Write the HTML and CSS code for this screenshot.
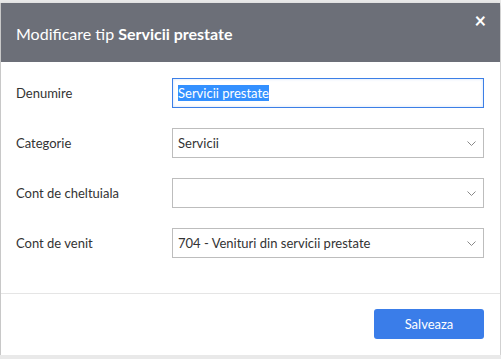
FILE: index.html
```html
<!DOCTYPE html>
<html>
<head>
    <title>Modificare tip</title>
    <meta name="viewport" content="width=device-width, initial-scale=1">
    <link rel="stylesheet" href="styles.css">
</head>
<body>
    <div class="modal">
        <div class="modal-header">
            <h3>Modificare tip <b>Servicii prestate</b></h3>
            <span class="close">&times;</span>
        </div>
        <div class="modal-body">
            <div class="row">
                <label>Denumire</label>
                <div class="field focused"><span class="selected">Servicii prestate</span></div>
            </div>
            <div class="row">
                <label>Categorie</label>
                <div class="field select">
                    <span>Servicii</span>
                    <svg class="chevron" width="9" height="5" viewBox="0 0 9 5"><path d="M0.5 0.5l4 4 4-4" fill="none" stroke="#888" stroke-width="1"/></svg>
                </div>
            </div>
            <div class="row">
                <label>Cont de cheltuiala</label>
                <div class="field select">
                    <span></span>
                    <svg class="chevron" width="9" height="5" viewBox="0 0 9 5"><path d="M0.5 0.5l4 4 4-4" fill="none" stroke="#888" stroke-width="1"/></svg>
                </div>
            </div>
            <div class="row">
                <label>Cont de venit</label>
                <div class="field select">
                    <span>704 - Venituri din servicii prestate</span>
                    <svg class="chevron" width="9" height="5" viewBox="0 0 9 5"><path d="M0.5 0.5l4 4 4-4" fill="none" stroke="#888" stroke-width="1"/></svg>
                </div>
            </div>
        </div>
        <div class="modal-footer">
            <button class="button">Salveaza</button>
        </div>
    </div>
</body>
</html>
```

FILE: styles.css
```css
body {
    font-family: Lato, 'Liberation Sans', sans-serif;
    margin: 0;
    background-color: #e9e9e9;
    color: #333;
}
.modal {
    width: 499px;
    margin-top: 3px;
    background-color: #fff;
    border-left: 1px solid #c8c8c8;
    box-shadow: 0 2px 4px rgba(0,0,0,0.25);
}
.modal-header {
    position: relative;
    height: 59px;
    background-color: #6c6f78;
    color: #fff;
    display: flex;
    align-items: center;
    padding-left: 15px;
}
.modal-header h3 {
    margin: 0 0 -2px 0;
    font-size: 16px;
    font-weight: normal;
}
.modal-header b {
    font-weight: bold;
}
.close {
    position: absolute;
    top: 7px;
    right: 14px;
    font-size: 20px;
    font-weight: bold;
    line-height: 20px;
}
.modal-body {
    padding: 16px 15px 35px 15px;
    display: flex;
    flex-direction: column;
    gap: 20px;
}
.row {
    display: flex;
    align-items: center;
    height: 30px;
}
.row label {
    width: 156px;
    font-size: 13px;
}
.field {
    box-sizing: border-box;
    width: 312px;
    height: 30px;
    border: 1px solid #bdbdbd;
    display: flex;
    align-items: center;
    justify-content: space-between;
    padding: 0 7px 0 5px;
    font-size: 13px;
    color: #333;
}
.field.focused {
    border-color: #3c7fe6;
    box-shadow: inset 0 0 3px rgba(60,127,230,0.25);
}
.selected {
    background-color: #3390ff;
    color: #fff;
}
.modal-footer {
    border-top: 1px solid #e5e5e5;
    padding: 15px 16px 16px 15px;
    display: flex;
    justify-content: flex-end;
}
.button {
    width: 110px;
    height: 30px;
    background-color: #3a7de9;
    color: #fff;
    border: none;
    border-radius: 3px;
    font-family: Lato, sans-serif;
    font-size: 13px;
}
```
